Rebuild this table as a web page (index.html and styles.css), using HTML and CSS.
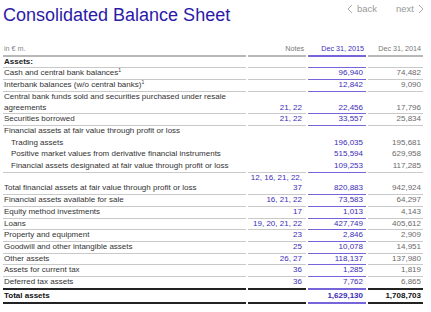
FILE: index.html
```html
<!DOCTYPE html>
<html lang="en">
<head>
    <meta charset="UTF-8">
    <meta name="viewport" content="width=device-width, initial-scale=1.0">
    <title>Consolidated Balance Sheet</title>
    <link rel="stylesheet" href="styles.css">
</head>
<body>
    <div class="top">
        <h1>Consolidated Balance Sheet</h1>
        <div class="nav">
            <span class="nav-link">
                <svg class="chev" width="6" height="10" viewBox="0 0 6 10"><polyline points="5,1 1,5 5,9" /></svg>
                back
            </span>
            <span class="nav-link">
                next
                <svg class="chev" width="6" height="10" viewBox="0 0 6 10"><polyline points="1,1 5,5 1,9" /></svg>
            </span>
        </div>
    </div>
    <table class="sheet">
        <colgroup>
            <col class="c-label">
            <col class="c-notes">
            <col class="c-cur">
            <col class="c-prev">
        </colgroup>
        <thead>
            <tr>
                <th class="unit">in € m.</th>
                <th class="notes">Notes</th>
                <th class="cur">Dec 31, 2015</th>
                <th class="prev">Dec 31, 2014</th>
            </tr>
        </thead>
        <tbody>
            <tr class="section">
                <td>Assets:</td><td class="notes"></td><td class="cur"></td><td class="prev"></td>
            </tr>
            <tr>
                <td>Cash and central bank balances<sup>1</sup></td><td class="notes"></td><td class="cur">96,940</td><td class="prev">74,482</td>
            </tr>
            <tr>
                <td>Interbank balances (w/o central banks)<sup>1</sup></td><td class="notes"></td><td class="cur">12,842</td><td class="prev">9,090</td>
            </tr>
            <tr>
                <td>Central bank funds sold and securities purchased under resale agreements</td><td class="notes">21, 22</td><td class="cur">22,456</td><td class="prev">17,796</td>
            </tr>
            <tr>
                <td>Securities borrowed</td><td class="notes">21, 22</td><td class="cur">33,557</td><td class="prev">25,834</td>
            </tr>
            <tr class="open">
                <td>Financial assets at fair value through profit or loss</td><td class="notes"></td><td class="cur"></td><td class="prev"></td>
            </tr>
            <tr class="open sub">
                <td>Trading assets</td><td class="notes"></td><td class="cur">196,035</td><td class="prev">195,681</td>
            </tr>
            <tr class="open sub">
                <td>Positive market values from derivative financial instruments</td><td class="notes"></td><td class="cur">515,594</td><td class="prev">629,958</td>
            </tr>
            <tr class="sub">
                <td>Financial assets designated at fair value through profit or loss</td><td class="notes"></td><td class="cur">109,253</td><td class="prev">117,285</td>
            </tr>
            <tr>
                <td>Total financial assets at fair value through profit or loss</td><td class="notes">12, 16, 21, 22,<br>37</td><td class="cur">820,883</td><td class="prev">942,924</td>
            </tr>
            <tr>
                <td>Financial assets available for sale</td><td class="notes">16, 21, 22</td><td class="cur">73,583</td><td class="prev">64,297</td>
            </tr>
            <tr>
                <td>Equity method investments</td><td class="notes">17</td><td class="cur">1,013</td><td class="prev">4,143</td>
            </tr>
            <tr>
                <td>Loans</td><td class="notes">19, 20, 21, 22</td><td class="cur">427,749</td><td class="prev">405,612</td>
            </tr>
            <tr>
                <td>Property and equipment</td><td class="notes">23</td><td class="cur">2,846</td><td class="prev">2,909</td>
            </tr>
            <tr>
                <td>Goodwill and other intangible assets</td><td class="notes">25</td><td class="cur">10,078</td><td class="prev">14,951</td>
            </tr>
            <tr>
                <td>Other assets</td><td class="notes">26, 27</td><td class="cur">118,137</td><td class="prev">137,980</td>
            </tr>
            <tr>
                <td>Assets for current tax</td><td class="notes">36</td><td class="cur">1,285</td><td class="prev">1,819</td>
            </tr>
            <tr class="before-total">
                <td>Deferred tax assets</td><td class="notes">36</td><td class="cur">7,762</td><td class="prev">6,865</td>
            </tr>
            <tr class="total">
                <td>Total assets</td><td class="notes"></td><td class="cur">1,629,130</td><td class="prev">1,708,703</td>
            </tr>
        </tbody>
    </table>
</body>
</html>
```

FILE: styles.css
```css
body {
    margin: 0;
    padding: 0 1px;
    font-family: "Liberation Sans", Arial, sans-serif;
    color: #333;
    background: #fff;
}
.top {
    display: flex;
    justify-content: space-between;
    align-items: flex-start;
    padding: 0 6px 0 2px;
    height: 44px;
}
h1 {
    margin: 4px 0 0;
    font-size: 18px;
    line-height: 22px;
    font-weight: normal;
    color: #2b1aa8;
}
.nav {
    display: flex;
    gap: 19px;
    margin-top: 3px;
    font-size: 9.5px;
    color: #999;
}
.nav-link {
    display: flex;
    align-items: center;
    gap: 4px;
}
.chev polyline {
    fill: none;
    stroke: #aaa;
    stroke-width: 1;
}
.sheet {
    border-collapse: separate;
    border-spacing: 2px 0;
    font-size: 8px;
    line-height: 10.7px;
    width: 424px;
    table-layout: fixed;
}
.c-label { width: 243px; }
.c-notes { width: 58px; }
.c-cur { width: 58px; }
.c-prev { width: 55px; }
th, td {
    padding: 0 2px 0 1px;
    vertical-align: bottom;
    border-bottom: 1px solid #c9c9c9;
}
th {
    font-size: 7.2px;
    font-weight: normal;
    text-align: right;
    color: #777;
    border-bottom: 2px solid #b8b8b8;
}
th.unit {
    text-align: left;
    color: #888;
}
th.cur {
    color: #3b2cb8;
    border-bottom-color: #7565d8;
}
td.notes, td.cur, td.prev {
    text-align: right;
}
td.notes {
    color: #3b2cb8;
    padding-right: 4px;
}
td.cur {
    color: #3b2cb8;
    border-bottom-color: #7565d8;
    padding-right: 3px;
}
td.prev {
    color: #6a6a6a;
}
.section td:first-child {
    font-weight: bold;
    color: #222;
}
sup {
    font-size: 5px;
    line-height: 0;
    vertical-align: 3px;
}
.open td {
    border-bottom-color: transparent;
}
.open td.cur {
    border-bottom-color: transparent;
}
.sub td:first-child {
    padding-left: 8px;
}
.before-total td {
    border-bottom: none;
}
.total td {
    font-weight: bold;
    color: #111;
    border-top: 2px solid #222;
    border-bottom: 2px solid #222;
    line-height: 12.5px;
}
.total td.cur {
    color: #3b2cb8;
    border-top-color: #7565d8;
    border-bottom-color: #7565d8;
}
```
